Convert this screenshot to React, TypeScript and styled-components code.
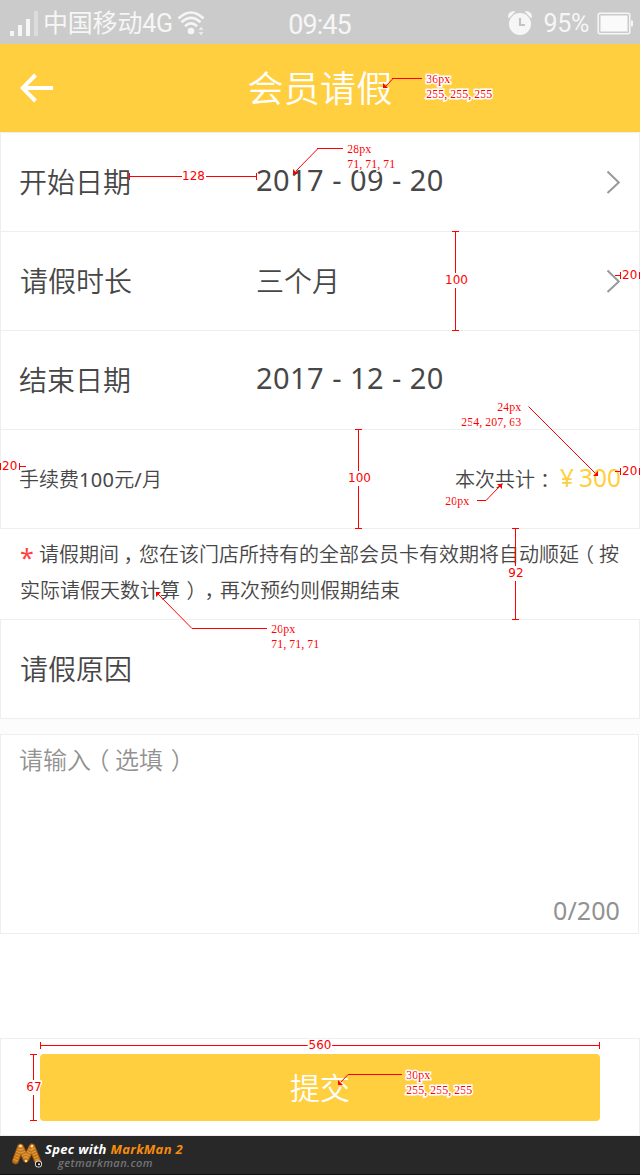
import React from "react";
import styled, { createGlobalStyle } from "styled-components";

const RED = "#ff0000";
const YELLOW = "#ffcf3f";
const INK = "#474747";
const LINE = "#eeeeee";

const GlobalStyle = createGlobalStyle`
  * { box-sizing: border-box; }
  body {
    margin: 0;
    background: #fff;
    color: ${INK};
    font-family: "Noto Sans", "Noto Sans CJK SC", sans-serif;
    font-weight: 350;
  }
`;

const Page = styled.main`
  position: relative;
  width: 640px;
  height: 1175px;
  overflow: hidden;
  display: flex;
  flex-direction: column;
  background: #fff;
`;

const StatusBar = styled.div`
  height: 44px;
  flex: none;
  display: grid;
  grid-template-columns: 1fr auto 1fr;
  align-items: center;
  background: #cbcbcb;
  color: #f6f6f6;
  padding: 0 6px 0 9px;
`;

const StatusGroup = styled.div<{ $end?: boolean }>`
  display: flex;
  align-items: center;
  justify-content: ${(p) => (p.$end ? "flex-end" : "flex-start")};
  gap: 4px;
  svg { flex: none; }
`;

const Carrier = styled.span`
  font: 400 25px/44px "Roboto", "Noto Sans CJK SC", sans-serif;
  letter-spacing: -0.2px;
  white-space: nowrap;
`;

const Clock = styled.span`
  font: 400 27px/44px "Roboto", sans-serif;
  letter-spacing: -0.9px;
  padding: 3px 4px 0 0;
`;

const Percent = styled.span`
  font: 400 25px/40px "Roboto", sans-serif;
  letter-spacing: -0.3px;
  padding: 0 4px 0 6px;
`;

const Header = styled.header`
  height: 88px;
  flex: none;
  display: grid;
  grid-template-columns: 60px 1fr 60px;
  align-items: center;
  background: ${YELLOW};
  color: #fff;
  padding-left: 20px;
  padding-right: 20px;
`;

const Title = styled.h1`
  margin: 0;
  text-align: center;
  font-size: 36px;
  font-weight: 350;
  letter-spacing: 0.3px;
  line-height: 86px;
  padding-top: 2px;
`;

const Row = styled.div<{ $first?: boolean }>`
  height: ${(p) => (p.$first ? 100 : 99)}px;
  flex: none;
  display: flex;
  align-items: center;
  border: 1px solid ${LINE};
  border-top-width: ${(p) => (p.$first ? 1 : 0)}px;
  padding: 0 18px 0 19px;
`;

const Label = styled.span<{ $pull?: boolean }>`
  width: 236px;
  font-size: 28px;
  line-height: 40px;
  margin-left: ${(p) => (p.$pull ? -1 : 0)}px;
  margin-right: ${(p) => (p.$pull ? 1 : 0)}px;
`;

const Value = styled.span<{ $date?: boolean }>`
  flex: 1;
  font-size: ${(p) => (p.$date ? 29 : 28)}px;
  font-weight: ${(p) => (p.$date ? 400 : 350)};
  line-height: 40px;
  letter-spacing: ${(p) => (p.$date ? "0.45px" : "0")};
  padding-bottom: ${(p) => (p.$date ? 4 : 0)}px;
`;

const Fee = styled.span`
  flex: 1;
  font-size: 20px;
  margin-left: -1px;
  padding-bottom: 2px;
`;

const Digits = styled.span`
  font-weight: 400;
  letter-spacing: 0.3px;
`;

const Total = styled.span`
  display: flex;
  align-items: baseline;
  font-size: 20px;
  padding-bottom: 4px;
`;

const Amount = styled.span`
  color: #fecf3f;
  font-size: 24.5px;
  font-weight: 400;
  margin-left: 5px;
`;

const Yen = styled.span`
  margin-right: 5px;
`;

// Full-width punctuation cell whose half-width glyph sits at a chosen inset.
const Punct = styled.span<{ $inset: number }>`
  display: inline-block;
  width: 1em;
  padding-left: ${(p) => p.$inset}em;
  font-family: "Noto Sans CJK SC", sans-serif;
  font-feature-settings: "halt";
  line-height: 1;
`;

const Notice = styled.p`
  margin: 0;
  height: 90px;
  flex: none;
  padding: 8px 0 0 20px;
  font-size: 20px;
  line-height: 36px;
  white-space: nowrap;
`;

const Star = styled.span`
  display: inline-block;
  width: 19px;
  color: #ff4040;
  font-size: 25px;
  font-weight: 400;
  line-height: 20px;
  vertical-align: -5px;
`;

const Gap = styled.div`
  height: 15px;
  flex: none;
  background: #fcfcfc;
`;

const Input = styled.div`
  width: 639px;
  height: 200px;
  flex: none;
  display: flex;
  flex-direction: column;
  justify-content: space-between;
  border: 1px solid ${LINE};
  padding: 7px 18px 5px;
  color: #929292;
  font-size: 24px;
  line-height: 36px;
`;

const Counter = styled.span`
  align-self: flex-end;
  font-size: 25px;
  font-weight: 400;
  letter-spacing: 0.1px;
`;

const Spacer = styled.div`
  flex: 1;
`;

const Footer = styled.footer`
  height: 98px;
  flex: none;
  border: 1px solid ${LINE};
  padding: 15px 39px 0;
`;

const Submit = styled.button`
  display: block;
  width: 560px;
  height: 67px;
  border: 0;
  border-radius: 4px;
  padding: 0 0 3px;
  background: ${YELLOW};
  color: #fff;
  font: inherit;
  font-size: 30px;
`;

const Brand = styled.div`
  height: 39px;
  flex: none;
  display: flex;
  gap: 1px;
  padding-left: 11px;
  background: #282828;
  border-bottom: 1px solid #111;
  font-family: "Open Sans", sans-serif;
  font-style: italic;
  font-weight: 700;
`;

const BrandText = styled.div`
  display: flex;
  flex-direction: column;
  padding-top: 6px;
  white-space: nowrap;
`;

const BrandName = styled.span`
  color: #fff;
  font-size: 13px;
  line-height: 15px;
  letter-spacing: 0.33px;
  em { color: #f78c0c; }
`;

const BrandSite = styled.span`
  color: #747474;
  font-size: 11px;
  line-height: 12px;
  letter-spacing: 0.43px;
  margin-left: 13px;
  font-weight: 600;
`;

const Overlay = styled.svg`
  position: absolute;
  left: 0;
  top: 0;
  pointer-events: none;
`;

const DimText = styled.text`
  font: 400 12px "DejaVu Sans", sans-serif;
  fill: ${RED};
  stroke: #fff;
  stroke-width: 3px;
  paint-order: stroke;
`;

const NoteText = styled.text`
  font: 400 12px "Liberation Serif", serif;
  fill: ${RED};
  stroke: #fff;
  stroke-width: 3px;
  paint-order: stroke;
`;

const Chevron = () => (
  <svg width="15" height="24" viewBox="0 0 15 24" fill="none" stroke="#999" strokeWidth="2">
    <path d="M1.5 1.5 12.8 12.5 1.5 23" />
  </svg>
);

const Signal = () => (
  <svg width="30" height="28" viewBox="0 0 30 28" fill="currentColor">
    <rect x="1" y="21" width="4" height="5" />
    <rect x="9" y="15" width="4" height="11" />
    <rect x="17" y="9" width="4" height="17" />
    <rect x="25" y="1" width="4" height="25" opacity=".4" />
  </svg>
);

const Wifi = () => (
  <svg width="28" height="28" viewBox="0 0 28 28" fill="none" stroke="currentColor" strokeWidth="2.6">
    <path d="M1.5 8.5Q14-3.5 26.5 8.5" />
    <path d="M4.5 12.3Q14 3.3 23.5 12.3" />
    <path d="M8 16.2Q14 10.5 20 16.2" />
    <circle cx="14" cy="21" r="3.3" fill="currentColor" stroke="none" />
    <path d="M21.5 20 24 16.5 26.5 20ZM21.5 22 24 25.5 26.5 22Z" fill="currentColor" stroke="none" opacity=".7" />
  </svg>
);

const Alarm = () => (
  <svg width="26" height="28" viewBox="0 0 26 28" fill="none">
    <path d="M1.5 8.5C0 4 3.5 0 8.500 1.500ZM24.500 8.500C26 4 22.500 0 17.500 1.500Z" fill="#f6f6f6" />
    <circle cx="13" cy="14" r="11" fill="#f6f6f6" />
    <path d="M13 8v7h5" stroke="#c4c4c4" strokeWidth="2.200" />
  </svg>
);

const Battery = () => (
  <svg width="37" height="26" viewBox="0 0 37 26" fill="none">
    <rect x="1.2" y="2.200" width="31.600" height="20.500" rx="2" stroke="#f6f6f6" strokeWidth="1.500" />
    <rect x="3.500" y="4.500" width="27" height="16" fill="#fafafa" />
    <path d="M34 9.500h1q1 0 1 1v4q0 1-1 1h-1z" fill="#f6f6f6" />
  </svg>
);

const BackArrow = () => (
  <svg width="34" height="30" viewBox="0 0 34 30" fill="none" stroke="#fff" strokeWidth="4">
    <path d="M33 15H3M15.500 2 2.700 15l12.800 13" />
  </svg>
);

const Worm = () => (
  <svg width="33" height="34" viewBox="0 0 33 34" fill="none" strokeLinecap="round" strokeLinejoin="round">
    <path d="M4.500 25 9.500 11 15 23 21 11 27 26" stroke="#8c4f0e" strokeWidth="7" />
    <path d="M4.500 24.500 9.500 11 15 22.500 21 11 27 26" stroke="#c47518" strokeWidth="5.400" />
    <path d="M4.500 24.500 9.500 11 15 22.500 21 11 27 26" stroke="#e6a650" strokeWidth="4.600" strokeDasharray=".8 2" strokeLinecap="butt" />
    <circle cx="9.500" cy="10" r="1.300" fill="#ffe2a2" />
    <circle cx="21" cy="10" r="1.300" fill="#ffe2a2" />
    <circle cx="15" cy="25" r="1.300" fill="#ffe2a2" />
    <circle cx="27.500" cy="28" r="3.500" fill="#e8e8e8" />
    <circle cx="27.500" cy="28" r="2.600" fill="#111" />
    <circle cx="28" cy="28.300" r="1" fill="#fff" />
  </svg>
);

type DimProps = { from: number; to: number; at: number; text: string; lx: number; ly: number };

// Vertical measure: a capped line broken around its label.
const VDim = ({ from, to, at, text, lx, ly }: DimProps) => (
  <>
    <path
      d={`M${at} ${from}V${ly - 11}M${at} ${ly + 4}V${to}M${at - 3.5} ${from + 0.5}h7M${at - 3.5} ${to - 0.5}h7`}
      stroke={RED}
      shapeRendering="crispEdges"
    />
    <DimText x={lx} y={ly} textAnchor="middle">{text}</DimText>
  </>
);

const HDim = ({ from, to, at, text, lx, ly }: DimProps) => {
  const half = text.length * 4;
  return (
    <>
      <path
        d={`M${from} ${at}H${lx - half}M${lx + half} ${at}H${to}M${from + 0.5} ${at - 3.5}v7M${to - 0.5} ${at - 3.5}v7`}
        stroke={RED}
        shapeRendering="crispEdges"
      />
      <DimText x={lx} y={ly} textAnchor="middle">{text}</DimText>
    </>
  );
};

// Margins narrower than their label keep both caps, with a short tail inside.
const Margin = ({ caps, tail, at, x, y }: { caps: [number, number]; tail: [number, number]; at: number; x: number; y: number }) => (
  <>
    <DimText x={x} y={y}>20</DimText>
    <path
      d={`M${caps[0]} ${at - 3.5}v7M${caps[1]} ${at - 3.5}v7M${tail[0]} ${at}H${tail[1]}`}
      stroke={RED}
      shapeRendering="crispEdges"
    />
  </>
);

// Notes are set on a fixed six-pixel pitch.
const Note = ({ x, y, lines }: { x: number; y: number; lines: [string, number?][] }) => (
  <>
    {lines.map(([text, dx = 0], i) => (
      <NoteText key={i} y={y + i * 15} x={[...text].map((_, n) => x + 0.3 + dx + n * 6).join(" ")}>
        {text}
      </NoteText>
    ))}
  </>
);

const Leader = ({ slope, flat, head }: { slope: string; flat?: string; head: string }) => (
  <>
    <path d={slope} stroke={RED} fill="none" />
    {flat && <path d={flat} stroke={RED} shapeRendering="crispEdges" />}
    <path d={head} fill={RED} />
  </>
);

const Annotations = () => (
  <Overlay width="640" height="1175" viewBox="0 0 640 1175">
    <Leader slope="M386 86 393 78.500" flat="M392 78.500H422" head="M383 83V88H388Z" />
    <Note x={426} y={83} lines={[["36px"], ["255,255,255"]]} />
    <Leader slope="M296 171 318 148.500" flat="M317 148.500H343" head="M293 169V174H298Z" />
    <Note x={347} y={153} lines={[["28px"], ["71,71,71"]]} />
    <HDim from={129} to={257} at={176.5} text="128" lx={193.5} ly={180} />
    <VDim from={231} to={331} at={455.5} text="100" lx={456.5} ly={284} />
    <Margin caps={[620.5, 639.5]} tail={[615, 621]} at={275.5} x={622} y={279} />
    <VDim from={429} to={529} at={358.5} text="100" lx={359.5} ly={482} />
    <Margin caps={[0.5, 19.5]} tail={[19, 26]} at={466.5} x={2} y={470} />
    <Margin caps={[620.5, 639.5]} tail={[615, 621]} at={471.5} x={622} y={475} />
    <Leader slope="M528.500 406.500 595 473" head="M593 476H598V471Z" />
    <Note x={461} y={411} lines={[["24px", 36], ["254,207,63"]]} />
    <Leader slope="M486 500.500 499 487" flat="M477 500.500H486" head="M497 484H502V489Z" />
    <Note x={445} y={505} lines={[["20px"]]} />
    <VDim from={528} to={620} at={515.5} text="92" lx={516} ly={577} />
    <Leader slope="M158 594 192 628.500" flat="M192 628.500H267" head="M156 597V592H161Z" />
    <Note x={271} y={633} lines={[["20px"], ["71,71,71"]]} />
    <HDim from={40} to={600} at={1045.5} text="560" lx={320} ly={1049} />
    <VDim from={1054} to={1121} at={33.5} text="67" lx={34} ly={1091} />
    <Leader slope="M341 1082 348 1074.500" flat="M348 1074.500H402" head="M338 1080V1085H343Z" />
    <Note x={406} y={1079} lines={[["30px"], ["255,255,255"]]} />
  </Overlay>
);

export default function App() {
  return (
    <Page>
      <GlobalStyle />
      <StatusBar>
        <StatusGroup>
          <Signal />
          <Carrier>中国移动4G</Carrier>
          <Wifi />
        </StatusGroup>
        <Clock>09:45</Clock>
        <StatusGroup $end>
          <Alarm />
          <Percent>95%</Percent>
          <Battery />
        </StatusGroup>
      </StatusBar>
      <Header>
        <BackArrow />
        <Title>会员请假</Title>
      </Header>
      <Row $first>
        <Label $pull>开始日期</Label>
        <Value $date>2017 - 09 - 20</Value>
        <Chevron />
      </Row>
      <Row>
        <Label>请假时长</Label>
        <Value>三个月</Value>
        <Chevron />
      </Row>
      <Row>
        <Label $pull>结束日期</Label>
        <Value $date>2017 - 12 - 20</Value>
      </Row>
      <Row>
        <Fee>手续费<Digits>100</Digits>元<Digits>/</Digits>月</Fee>
        <Total>
          本次共计<Punct $inset={0.25}>：</Punct>
          <Amount><Yen>¥</Yen>300</Amount>
        </Total>
      </Row>
      <Notice>
        <Star>*</Star>请假期间<Punct $inset={0.23}>，</Punct>您在该门店所持有的全部会员卡有效期将自动顺延<Punct $inset={0.25}>（</Punct>按
        <br />
        实际请假天数计算<Punct $inset={0.33}>）</Punct><Punct $inset={0.23}>，</Punct>再次预约则假期结束
      </Notice>
      <Row $first>
        <Label>请假原因</Label>
      </Row>
      <Gap />
      <Input>
        <span>请输入<Punct $inset={0.27}>（</Punct>选填<Punct $inset={0.32}>）</Punct></span>
        <Counter>0/200</Counter>
      </Input>
      <Spacer />
      <Footer>
        <Submit>提交</Submit>
      </Footer>
      <Brand>
        <Worm />
        <BrandText>
          <BrandName>Spec with <em>MarkMan 2</em></BrandName>
          <BrandSite>getmarkman.com</BrandSite>
        </BrandText>
      </Brand>
      <Annotations />
    </Page>
  );
}
